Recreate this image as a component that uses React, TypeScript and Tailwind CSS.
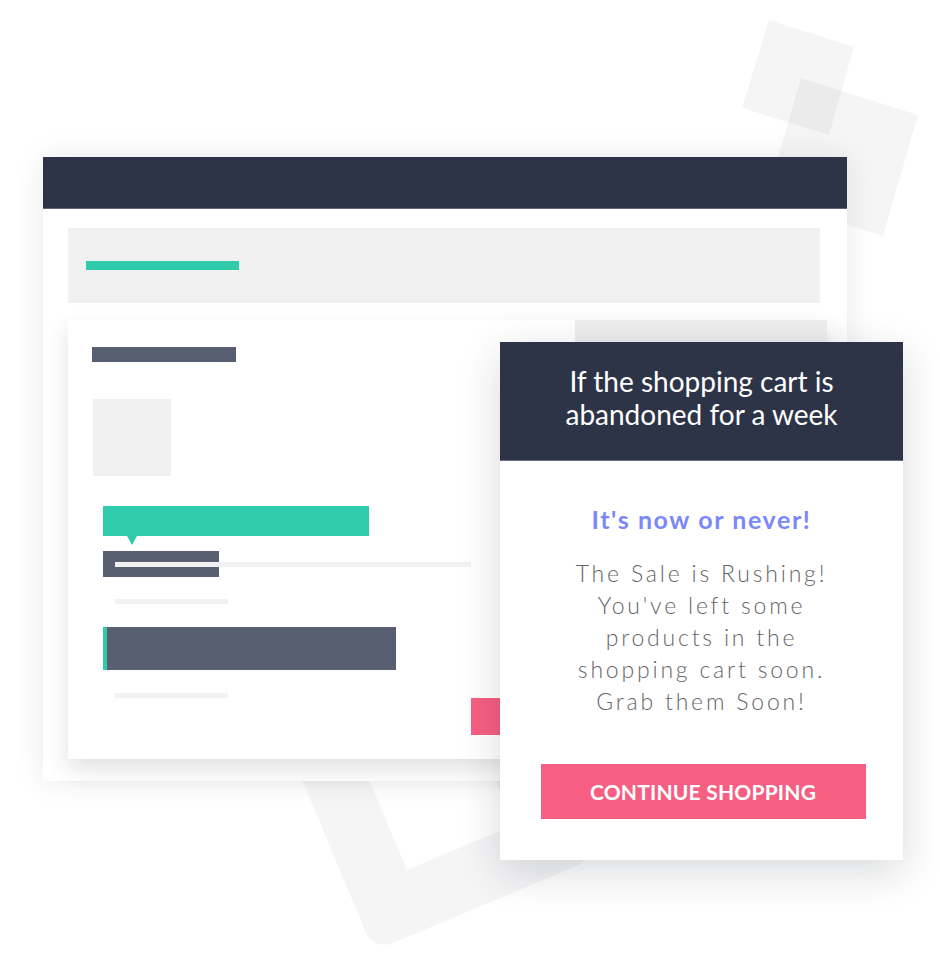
export default function App() {
  return (
    <div className="relative w-[940px] h-[966px] overflow-hidden bg-white font-['Lato','Open_Sans',sans-serif]">
      {/* decorative background shapes */}
      <svg className="absolute inset-0" width="940" height="966" viewBox="0 0 940 966">
        <polygon points="769,20 854,47 829,135 742,108" fill="#000" fillOpacity="0.04" />
        <polygon points="801,78 918,115 883,236 766,199" fill="#000" fillOpacity="0.04" />
        <g transform="translate(438 794) rotate(-22.7)">
          <rect x="-120" y="-120" width="240" height="240" rx="20" fill="#f5f5f6" />
          <rect x="-58" y="-58" width="116" height="116" fill="#fff" />
        </g>
      </svg>

      <div className="relative pt-[157px] pl-[43px]">
        {/* browser window */}
        <div className="w-[804px] h-[624px] bg-white shadow-[0_0_28px_rgba(0,0,0,0.09)]">
          <div className="h-[52px] bg-[#2e3447] border-b border-[#5e6579]" />
          <div className="pl-[25px] pr-[27px] pt-[19px]">
            <div className="h-[75px] bg-[#f1f1f1] flex items-center pl-[18px]">
              <div className="w-[153px] h-[9px] bg-[#30cbab]" />
            </div>

            {/* inner card */}
            <div className="mt-[17px] w-[759px] h-[439px] bg-white flex shadow-[0_10px_22px_rgba(0,0,0,0.12)]">
              <div className="w-[507px] pl-[24px] pt-[27px]">
                <div className="w-[144px] h-[15px] bg-[#575f71]" />
                <div className="mt-[37px] ml-px w-[78px] h-[77px] bg-[#f1f1f1]" />

                <div className="pl-[11px] mt-[30px]">
                  <div className="relative w-[266px] h-[30px] bg-[#30cbab]">
                    <div className="absolute left-[24px] top-full w-0 h-0 border-l-[5px] border-r-[5px] border-t-[9px] border-l-transparent border-r-transparent border-t-[#30cbab]" />
                  </div>
                  <div className="relative mt-[15px] h-[26px]">
                    <div className="w-[116px] h-[26px] bg-[#575f71]" />
                    <div className="absolute left-[12px] top-[11px] w-[356px] h-[5px] bg-[#f2f2f2]" />
                  </div>
                  <div className="mt-[22px] ml-[12px] w-[113px] h-[5px] bg-[#f2f2f2]" />
                  <div className="mt-[23px] w-[293px] h-[43px] bg-[#575f71] border-l-[4px] border-[#30cbab]" />
                  <div className="mt-[23px] ml-[12px] w-[113px] h-[5px] bg-[#f2f2f2]" />
                  <div className="ml-[368px] w-[100px] h-[37px] bg-[#f65f82]" />
                </div>
              </div>
              <div className="flex-1 bg-[#ededed]" />
            </div>
          </div>
        </div>

        {/* popup */}
        <div className="absolute left-[500px] top-[342px] w-[403px] h-[518px] bg-white flex flex-col shadow-[0_12px_40px_rgba(20,25,40,0.16)]">
          <div className="h-[119px] bg-[#2e3447] border-b border-[#6a7082] flex items-center justify-center text-center text-white text-[28px] leading-[33px]">
            <p className="-mt-[6px]">
              If the shopping cart is
              <br />
              abandoned for a week
            </p>
          </div>
          <div className="flex flex-col items-center pt-[43px] text-center">
            <p className="text-[25px] leading-[30px] font-bold tracking-[1.6px] text-[#7b88fa]">It's now or never!</p>
            <p className="mt-[23px] text-[23px] leading-[32px] font-light tracking-[2.8px] text-[#666666]">
              The Sale is Rushing!
              <br />
              You've left some
              <br />
              products in the
              <br />
              shopping cart soon.
              <br />
              Grab them Soon!
            </p>
            <button className="mt-[47px] ml-[3px] w-[325px] h-[55px] bg-[#f65f82] text-white text-[21px] tracking-[0.2px] font-bold">
              CONTINUE SHOPPING
            </button>
          </div>
        </div>
      </div>
    </div>
  )
}
